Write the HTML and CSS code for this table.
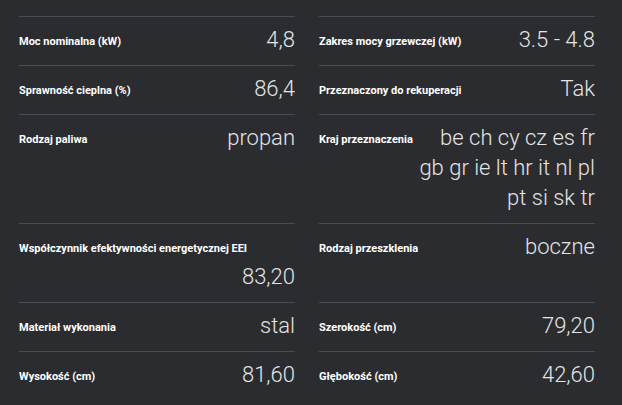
FILE: index.html
```html
<!DOCTYPE html>
<html lang="pl">
<head>
<meta charset="utf-8">
<link rel="stylesheet" href="styles.css">
</head>
<body>
<div class="specs">
  <div class="cell"><span class="label">Moc nominalna (kW)</span><span class="value">4,8</span></div>
  <div class="cell"><span class="label">Zakres mocy grzewczej (kW)</span><span class="value">3.5 - 4.8</span></div>
  <div class="cell"><span class="label">Sprawność cieplna (%)</span><span class="value">86,4</span></div>
  <div class="cell"><span class="label">Przeznaczony do rekuperacji</span><span class="value">Tak</span></div>
  <div class="cell"><span class="label">Rodzaj paliwa</span><span class="value">propan</span></div>
  <div class="cell"><span class="label">Kraj przeznaczenia</span><span class="value">be ch cy cz es fr gb gr ie lt hr it nl pl pt si sk tr</span></div>
  <div class="cell"><span class="label">Współczynnik efektywności energetycznej EEI</span><span class="value">83,20</span></div>
  <div class="cell"><span class="label">Rodzaj przeszklenia</span><span class="value">boczne</span></div>
  <div class="cell"><span class="label">Materiał wykonania</span><span class="value">stal</span></div>
  <div class="cell"><span class="label">Szerokość (cm)</span><span class="value">79,20</span></div>
  <div class="cell"><span class="label">Wysokość (cm)</span><span class="value">81,60</span></div>
  <div class="cell"><span class="label">Głębokość (cm)</span><span class="value">42,60</span></div>
</div>
</body>
</html>
```
FILE: styles.css
```css
html, body {
  margin: 0;
  padding: 0;
  background: #2b2c30;
}
body {
  font-family: Roboto, "Liberation Sans", sans-serif;
  padding: 16px 27px 0 19px;
}
.specs {
  display: grid;
  grid-template-columns: 276px 276px;
  column-gap: 24px;
}
.cell {
  border-top: 1px solid #4a4b50;
  padding: 8px 0 10px;
  display: flex;
  flex-wrap: wrap;
  align-items: flex-start;
  column-gap: 4px;
}
.label {
  color: #ffffff;
  font-weight: 700;
  font-size: 11px;
  line-height: 30px;
  padding-top: 2px;
  margin-bottom: -2px;
}
.value {
  margin-left: auto;
  max-width: 64%;
  text-align: right;
  color: #e4e4e4;
  font-weight: 300;
  font-size: 22px;
  line-height: 30px;
}
```
